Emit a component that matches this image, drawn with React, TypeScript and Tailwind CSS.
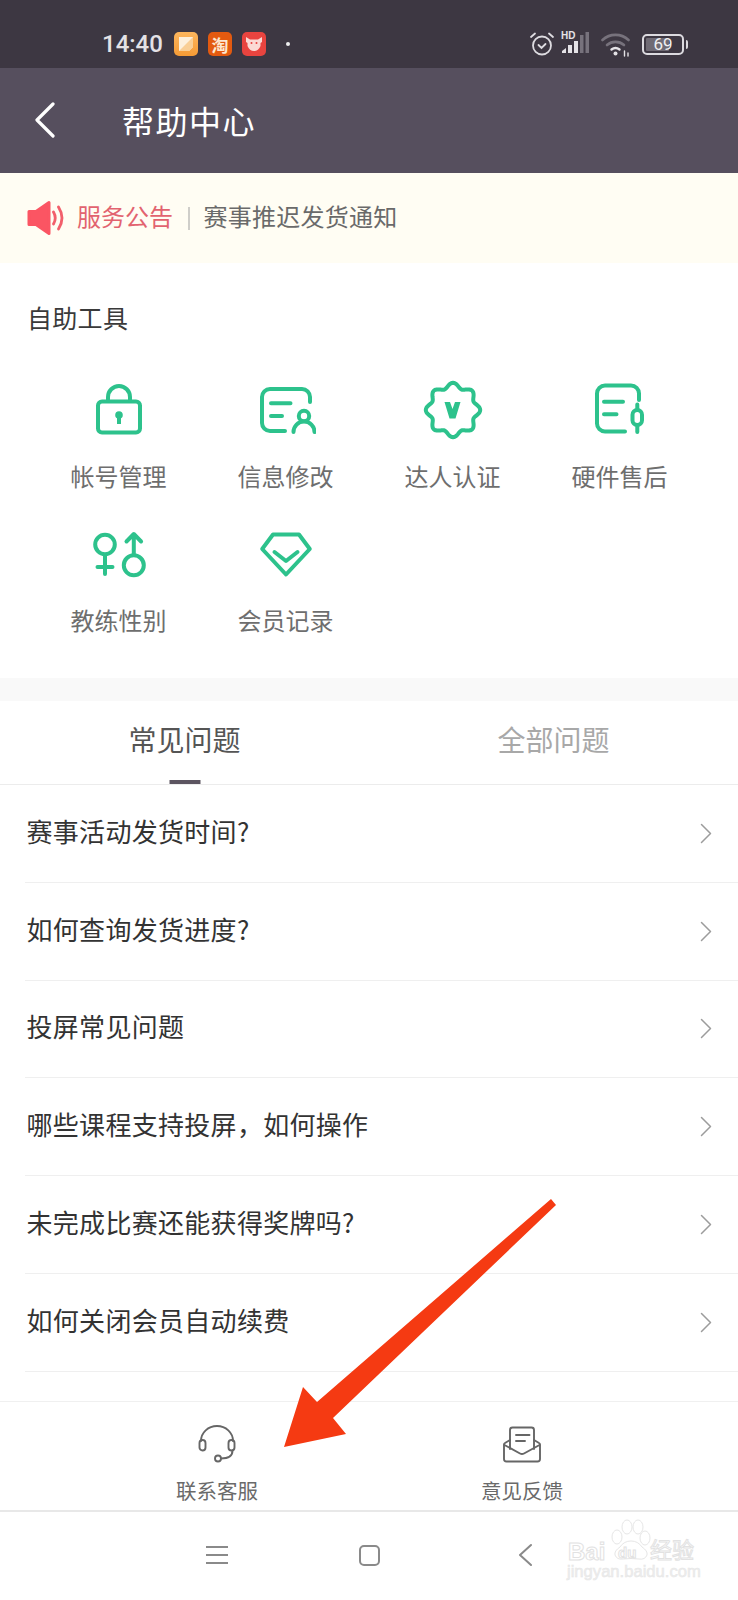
const font = { fontFamily: '"Noto Sans CJK SC", "Liberation Sans", sans-serif' };

const G = { fill: "none", stroke: "#2dc28c", strokeWidth: 4, strokeLinecap: "round" as const, strokeLinejoin: "round" as const };

const flower = (() => {
  const pts: string[] = [];
  for (let i = 0; i < 160; i++) {
    const t = (i / 160) * Math.PI * 2;
    const r = 24.7 + 2.5 * Math.cos(8 * t);
    pts.push(`${(30 + r * Math.cos(t)).toFixed(2)},${(30 + r * Math.sin(t)).toFixed(2)}`);
  }
  return "M" + pts.join("L") + "Z";
})();

function IconLock() {
  return (
    <svg width="60" height="60" viewBox="0 0 60 60">
      <g {...G}>
        <rect x="9" y="21.5" width="42" height="31" rx="4" />
        <path d="M19 21v-4a11 11 0 0 1 22 0v4" />
      </g>
      <circle cx="30" cy="35" r="3.8" fill="#2dc28c" />
      <rect x="28" y="35" width="4" height="9" fill="#2dc28c" />
    </svg>
  );
}
function IconInfo() {
  return (
    <svg width="60" height="60" viewBox="0 0 60 60">
      <g {...G}>
        <path d="M29 51H14a8 8 0 0 1-8-8V17a8 8 0 0 1 8-8h32a8 8 0 0 1 8 8v5" />
        <path d="M15 23.300h19.500M15 36h11" />
        <circle cx="48" cy="36" r="5.200" />
        <path d="M37.500 52a10.500 10.500 0 0 1 21 0" />
      </g>
    </svg>
  );
}
function IconBadge() {
  return (
    <svg width="60" height="60" viewBox="0 0 60 60">
      <path {...G} d={flower} />
      <path d="M21.500 22h5.500l2.500 7 2.500-7h5.500l-5 16.500h-6z" fill="#2dc28c" />
    </svg>
  );
}
function IconHardware() {
  return (
    <svg width="60" height="60" viewBox="0 0 60 60">
      <g {...G}>
        <path d="M35 51.500H15a8 8 0 0 1-8-8V13.500a8 8 0 0 1 8-8h26a8 8 0 0 1 8 8V20" />
        <path d="M14 21.700h19M14 34.300h12.500" />
        <rect x="42.500" y="30" width="9.500" height="15" rx="4.700" />
        <path d="M47.300 24.500v5M47.300 45.500v6.500" />
      </g>
    </svg>
  );
}
function IconGender() {
  return (
    <svg width="60" height="60" viewBox="0 0 60 60">
      <g {...G}>
        <circle cx="16" cy="20.500" r="9.800" />
        <path d="M16 31v19M8.500 43h15" />
        <circle cx="44.800" cy="41.300" r="10" />
        <path d="M44.800 31V10.500M37.500 17.500l7.300-7.500 7.300 7.500" />
      </g>
    </svg>
  );
}
function IconDiamond() {
  return (
    <svg width="60" height="60" viewBox="0 0 60 60">
      <g {...G}>
        <path d="M17 10.500h26L53.800 25 30 50.500 6.200 25z" />
        <path d="M18.500 28L30 37l11.500-9" />
      </g>
    </svg>
  );
}

const tools = [
  { label: "帐号管理", Icon: IconLock },
  { label: "信息修改", Icon: IconInfo },
  { label: "达人认证", Icon: IconBadge },
  { label: "硬件售后", Icon: IconHardware },
  { label: "教练性别", Icon: IconGender },
  { label: "会员记录", Icon: IconDiamond },
];

const questions = [
  "赛事活动发货时间?",
  "如何查询发货进度?",
  "投屏常见问题",
  "哪些课程支持投屏，如何操作",
  "未完成比赛还能获得奖牌吗?",
  "如何关闭会员自动续费",
];

function StatusBar() {
  return (
    <div className="h-[68px] bg-[#3d3742] flex items-center pl-[102px] pr-[50px] pt-[20px] justify-between shrink-0">
      <div className="flex items-center">
        <span className="text-[24px] leading-none font-medium text-[#e4e2e6] w-[72px]" style={{ fontFamily: '"Roboto", sans-serif' }}>14:40</span>
        <div className="w-[24px] h-[24px] rounded-[5px] bg-linear-to-b from-[#fdb65c] to-[#f59b35] flex items-center justify-center">
          <svg width="16" height="16" viewBox="0 0 16 16"><path d="M1 1h14v10l-4 4H1z" fill="#fdf0dc" /><path d="M1 15L15 1v10l-4 4z" fill="#f9cf96" /></svg>
        </div>
        <div className="w-[24px] h-[24px] rounded-[5px] bg-[#e35a10] flex items-center justify-center ml-[10px] text-[17px] leading-none font-bold text-[#fde7cf]">淘</div>
        <div className="w-[24px] h-[24px] rounded-[5px] bg-[#e8443f] flex items-center justify-center ml-[10px]">
          <svg width="18" height="16" viewBox="0 0 18 16"><path d="M1 1l4 2.500h8L17 1v5l-1.500 1v3q-2 5-6.500 5t-6.500-5V7L1 6z" fill="#fbdad5" /><circle cx="6.500" cy="7" r="1" fill="#e8443f" /><circle cx="11.500" cy="7" r="1" fill="#e8443f" /></svg>
        </div>
        <div className="w-[4px] h-[4px] rounded-full bg-[#eeeeee] ml-[20px]" />
      </div>
      <div className="flex items-center">
        <svg width="26" height="26" viewBox="0 0 26 26" fill="none" stroke="#dedce1" strokeWidth="1.800" strokeLinecap="round">
          <circle cx="13" cy="14.500" r="9" />
          <path d="M9.500 14l3 3 4-4M2 6l4-3.500M24 6l-4-3.500" />
        </svg>
        <div className="relative w-[30px] h-[26px] ml-[6px]">
          <span className="absolute left-0 top-[-1px] text-[10px] font-bold text-[#e4e2e6] leading-[12px]" style={{ fontFamily: '"Liberation Sans", sans-serif' }}>HD</span>
          <svg className="absolute inset-0" width="30" height="26" viewBox="0 0 30 26">
            <path d="M1 22v-2l4-3v5z" fill="#e4e2e6" />
            <rect x="7" y="14" width="4" height="8" fill="#e4e2e6" />
            <rect x="13" y="10" width="4" height="12" fill="#e4e2e6" />
            <rect x="19" y="4" width="3.500" height="18" fill="#77727c" />
            <rect x="24.500" y="1" width="3.500" height="21" fill="#77727c" />
          </svg>
        </div>
        <svg width="30" height="26" viewBox="0 0 30 26" className="ml-[10px]" fill="none" strokeLinecap="round">
          <path d="M1.500 9a19 19 0 0 1 26 0" stroke="#77727c" strokeWidth="2.600" />
          <path d="M6 14a13 13 0 0 1 17 0" stroke="#77727c" strokeWidth="2.600" />
          <path d="M10.500 18.500a6.500 6.500 0 0 1 8 0" stroke="#e4e2e6" strokeWidth="2.400" />
          <circle cx="14.500" cy="22.500" r="2" fill="#e4e2e6" />
          <path d="M23.500 20v5M27 22v3" stroke="#e4e2e6" strokeWidth="1.400" />
        </svg>
        <div className="relative w-[42px] h-[21px] ml-[11px] border-2 border-[#dcdadf] rounded-[5px] p-[2px]">
          <div className="w-[68%] h-full bg-[#6f6a74] rounded-[1px]" />
          <span className="absolute inset-0 flex items-center justify-center text-[17px] leading-none text-[#f0eff1]" style={{ fontFamily: '"Roboto", sans-serif' }}>69</span>
        </div>
        <div className="w-[2px] h-[9px] bg-[#dcdadf] ml-[2px] rounded-r-sm" />
      </div>
    </div>
  );
}

export default function App() {
  return (
    <div className="relative w-[738px] h-[1600px] bg-white overflow-hidden flex flex-col" style={font}>
      <StatusBar />
      <div className="h-[105px] bg-[#564f5e] flex items-center shrink-0">
        <svg width="22" height="38" viewBox="0 0 22 38" className="ml-[33px] mb-[2px]" fill="none" stroke="#fff" strokeWidth="3.200" strokeLinecap="round" strokeLinejoin="round">
          <path d="M20 3L4 19l16 16" />
        </svg>
        <span className="ml-[67px] mb-[2px] text-[32px] leading-none text-white tracking-[1.5px]">帮助中心</span>
      </div>
      <div className="h-[90px] bg-[#fffdf3] flex items-center pl-[27px] shrink-0">
        <svg width="39" height="36" viewBox="0 0 39 36" className="mb-[1px]">
          <path d="M2 11.500h7L22 2.500v31L9 24.500H2z" fill="#fb5563" stroke="#fb5563" strokeWidth="3" strokeLinejoin="round" />
          <path d="M26.500 12q3.500 6 0 12M31.500 7q7 11 0 22" fill="none" stroke="#f25f6b" strokeWidth="2.800" strokeLinecap="round" />
        </svg>
        <span className="ml-[11px] mb-[5px] text-[24px] leading-none text-[#e2636f]">服务公告</span>
        <span className="ml-[15px] w-[2px] h-[23px] bg-[#cfcec9]" />
        <span className="ml-[13.500px] mb-[5px] text-[24px] leading-none text-[#6a6a6a] tracking-[0.25px]">赛事推迟发货通知</span>
      </div>
      <div className="pt-[36px] h-[415px] shrink-0">
        <div className="pl-[27px] text-[25px] leading-[37px] text-[#3a3a3a] tracking-[0.3px]">自助工具</div>
        <div className="grid grid-cols-4 w-[668px] ml-[35px] mt-[44px]">
          {tools.map(({ label, Icon }) => (
            <div key={label} className="flex flex-col items-center h-[144px]">
              <Icon />
              <span className="mt-[19px] text-[24px] leading-[34px] text-[#6e6e6e]">{label}</span>
            </div>
          ))}
        </div>
      </div>
      <div className="h-[23px] bg-[#f9f9f9] shrink-0" />
      <div className="h-[84px] flex border-b border-[#ececec] shrink-0">
        <div className="relative flex-1 flex items-center justify-center">
          <span className="mb-[8px] text-[28px] leading-none text-[#555555]">常见问题</span>
          <div className="absolute bottom-0 left-1/2 -translate-x-1/2 w-[31px] h-[4px] bg-[#5c5561]" />
        </div>
        <div className="flex-1 flex items-center justify-center">
          <span className="mb-[8px] text-[28px] leading-none text-[#a8a8a8]">全部问题</span>
        </div>
      </div>
      <div className="flex-1">
        {questions.map((q) => (
          <div key={q} className="h-[97.8px] ml-[25px] border-b border-[#efefef] flex items-center justify-between pl-[1.500px] pr-[26px]">
            <span className="mb-[5px] text-[26px] leading-none text-[#333333] tracking-[0.3px]">{q}</span>
            <svg width="12" height="21" viewBox="0 0 12 21" fill="none" stroke="#9c9c9c" strokeWidth="1.500" strokeLinecap="round" strokeLinejoin="round">
              <path d="M1.500 1.500L10.500 10.500L1.500 19.500" />
            </svg>
          </div>
        ))}
      </div>
      <div className="h-[111px] border-t border-[#f0f0f0] border-b-2 border-b-[#e8e8e8] flex shrink-0">
        <div className="w-[434px] flex flex-col items-center pt-[23px]">
          <svg width="38" height="40" viewBox="0 0 38 40" fill="none" stroke="#666" strokeWidth="1.900" strokeLinecap="round">
            <path d="M3 16a16 15 0 0 1 32 0" />
            <rect x="1.500" y="15" width="6" height="10.500" rx="3" />
            <rect x="30.500" y="15" width="6" height="10.500" rx="3" />
            <path d="M34.500 25.500q0 8-11.500 8" />
            <circle cx="20" cy="33.500" r="3" />
          </svg>
          <span className="mt-[11px] text-[20.500px] leading-[28px] text-[#6a6a6a]">联系客服</span>
        </div>
        <div className="w-[176px] flex flex-col items-center pt-[23px]">
          <svg width="40" height="40" viewBox="0 0 40 40" fill="none" stroke="#666" strokeWidth="1.900" strokeLinecap="round" strokeLinejoin="round">
            <path d="M8 24V5a2.500 2.500 0 0 1 2.500-2.500h19A2.500 2.500 0 0 1 32 5v19" />
            <path d="M14 10h13.500M14 16h9" />
            <path d="M8 15l-5 3a2 2 0 0 0-1 2v14a2.500 2.500 0 0 0 2.500 2.500h31a2.500 2.500 0 0 0 2.500-2.500V20a2 2 0 0 0-1-2l-5-3" />
            <path d="M2.500 20L18 28.500a4 4 0 0 0 4 0L37.500 20" />
          </svg>
          <span className="mt-[11px] text-[20.500px] leading-[28px] text-[#6a6a6a]">意见反馈</span>
        </div>
      </div>
      <div className="h-[88px] relative flex items-center shrink-0">
        <svg width="22" height="20" viewBox="0 0 22 20" className="ml-[206px] mb-[2px]" stroke="#8a8a8a" strokeWidth="2">
          <path d="M0 2h22M0 10h22M0 18h22" />
        </svg>
        <div className="ml-[131px] mb-[2px] border-2 border-[#8a8a8a] rounded-[5px] w-[21px] h-[21px]" />
        <svg width="14" height="24" viewBox="0 0 14 24" className="ml-[138px] mb-[2px]" fill="none" stroke="#8a8a8a" strokeWidth="2" strokeLinecap="round" strokeLinejoin="round">
          <path d="M13 2L2 12l11 10" />
        </svg>
      </div>
      <svg className="absolute left-0 top-0 pointer-events-none" width="738" height="1600" viewBox="0 0 738 1600">
        <polygon points="551,1199 556,1205 333,1418 346,1434 284,1447 303,1387 317,1402" fill="#f53a12" />
      </svg>
      <div className="absolute left-[563px] top-[1518px] w-[150px] h-[70px] pointer-events-none" style={{ fontFamily: '"Liberation Sans", sans-serif' }}>
        <svg className="absolute left-[46px] top-[1px]" width="44" height="44" viewBox="0 0 44 44" fill="#ffffff" stroke="#e6e6e6">
          <ellipse cx="8" cy="18" rx="5" ry="7" />
          <ellipse cx="18" cy="8" rx="5" ry="7" />
          <ellipse cx="29" cy="8" rx="5" ry="7" />
          <ellipse cx="36" cy="19" rx="5" ry="7" />
          <path d="M22 22q7 0 11 6q6 4 5 8q-2 5-8 4q-8-1-16 0q-6 1-8-4q-1-4 5-8q4-6 11-6z" />
        </svg>
        <div className="absolute left-[5px] top-[22px] text-[24px] font-bold leading-none text-white" style={{ WebkitTextStroke: "1px #e2e2e2" }}>Bai</div>
        <div className="absolute left-[55px] top-[27px] text-[15px] font-bold leading-none text-white" style={{ WebkitTextStroke: "1px #e2e2e2" }}>du</div>
        <div className="absolute left-[87px] top-[19px] text-[22px] leading-none text-white" style={{ ...font, WebkitTextStroke: "1px #e2e2e2" }}>经验</div>
        <div className="absolute left-[4px] top-[46px] text-[16.600px] leading-none text-[#eeeeee]" style={{ WebkitTextStroke: "0.5px #e6e6e6" }}>jingyan.baidu.com</div>
      </div>
    </div>
  );
}
